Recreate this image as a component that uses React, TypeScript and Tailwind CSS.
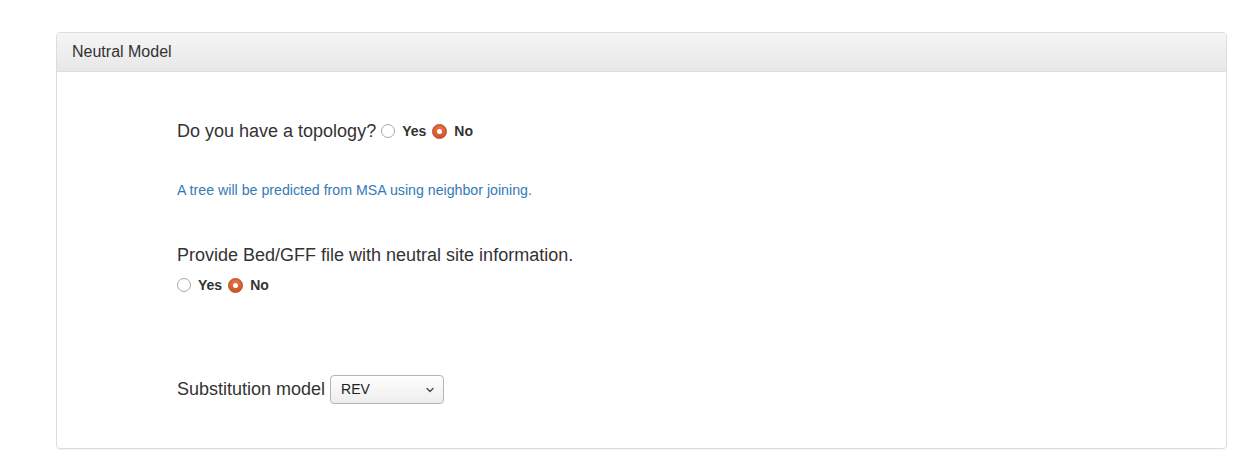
import { ChevronDown } from "lucide-react";

function Radio({ checked, label }: { checked?: boolean; label: string }) {
  return (
    <span className="inline-flex items-center">
      {checked ? (
        <span className="w-[15px] h-[15px] rounded-full bg-gradient-to-b from-[#e8764a] to-[#cf5226] border border-[#b9491f] flex items-center justify-center shadow-[inset_0_1px_1px_rgba(0,0,0,0.15)]">
          <span className="w-[5px] h-[5px] rounded-full bg-white" />
        </span>
      ) : (
        <span className="w-[14px] h-[14px] rounded-full bg-white border border-[#a8a8a8]" />
      )}
      <span className="ml-[7px] text-[14px] font-bold text-[#333]">{label}</span>
    </span>
  );
}

export default function App() {
  return (
    <div className="min-h-[469px] bg-white pt-[32px] px-[56px] pr-[32px] font-['Liberation_Sans',Arial,sans-serif] text-[#333]">
      <div className="border border-[#dddddd] rounded-[4px] shadow-[0_1px_1px_rgba(0,0,0,0.05)]">
        <div className="px-[15px] h-[39px] flex items-center text-[16px] bg-gradient-to-b from-[#f5f5f5] to-[#e8e8e8] border-b border-[#dddddd] rounded-t-[3px]">
          Neutral Model
        </div>
        <div className="pl-[120px] pt-[46px] pb-[44px]">
          <div className="flex items-center h-[26px] text-[18px]">
            <span>Do you have a topology?</span>
            <span className="ml-[5px] flex items-center gap-[6px]">
              <Radio label="Yes" />
              <Radio checked label="No" />
            </span>
          </div>
          <p className="mt-[37px] h-[18px] leading-[18px] text-[14.2px] text-[#337ab7]">
            A tree will be predicted from MSA using neighbor joining.
          </p>
          <div className="mt-[43px] h-[26px] leading-[26px] text-[18px]">
            Provide Bed/GFF file with neutral site information.
          </div>
          <div className="mt-[7px] h-[20px] flex items-center gap-[6px]">
            <Radio label="Yes" />
            <Radio checked label="No" />
          </div>
          <div className="mt-[80px] flex items-center h-[29px]">
            <span className="text-[18px]">Substitution model</span>
            <div className="ml-[5px] w-[114px] h-[29px] border border-[#b5b5b5] rounded-[4px] bg-gradient-to-b from-[#ffffff] to-[#ededed] flex items-center justify-between pl-[10px] pr-[7px] text-[14px] text-[#222]">
              <span>REV</span>
              <ChevronDown className="w-[12px] h-[12px] text-[#444]" strokeWidth={2.5} />
            </div>
          </div>
        </div>
      </div>
    </div>
  );
}
